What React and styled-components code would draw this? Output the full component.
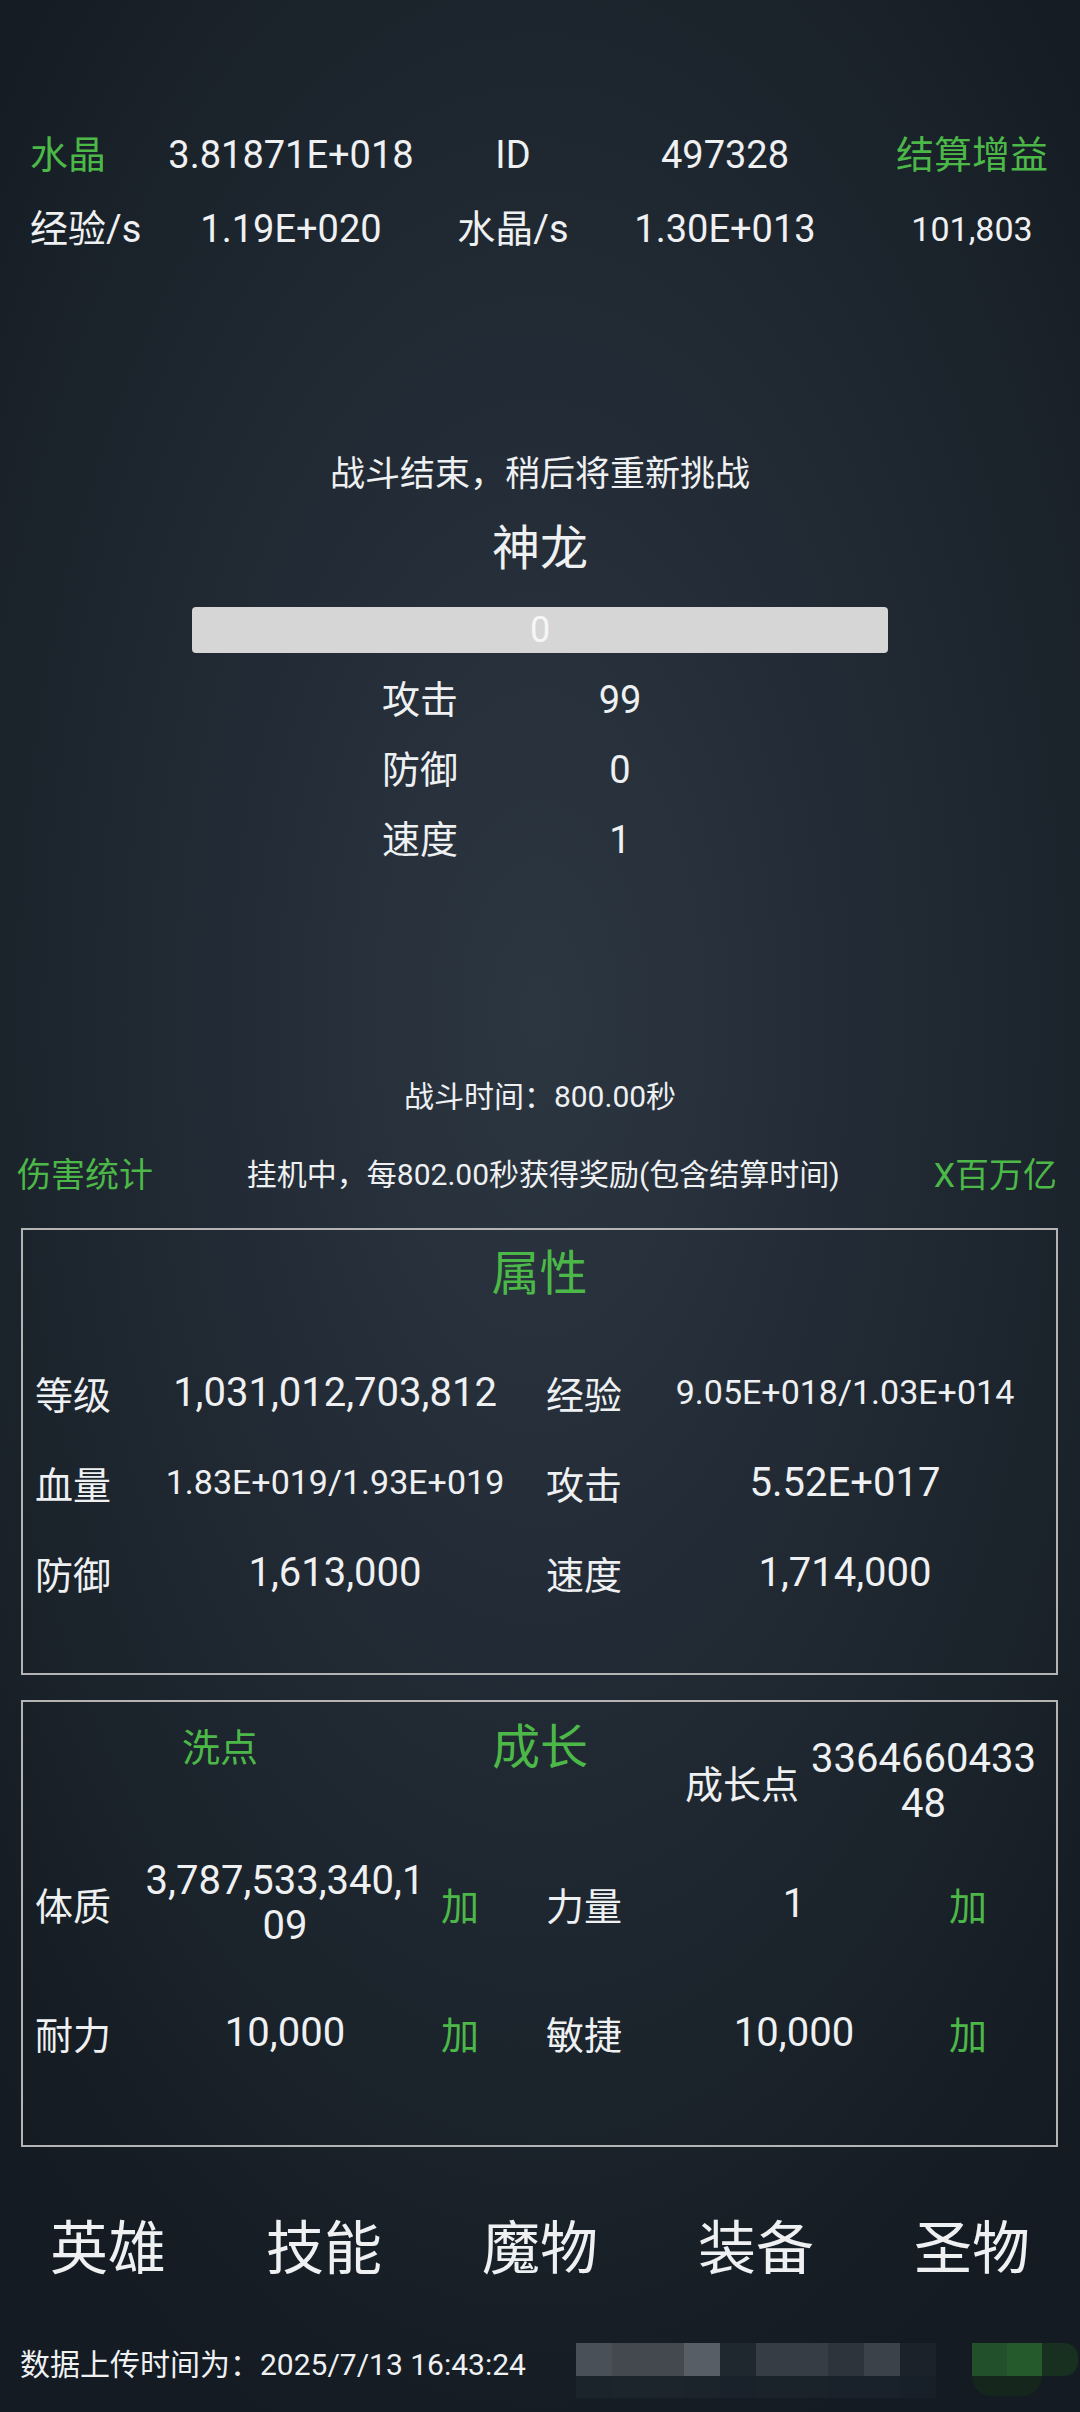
import React from 'react';
import styled, { createGlobalStyle } from 'styled-components';

const green = '#4cb848';
const white = '#eef0f2';

const GlobalStyle = createGlobalStyle`
  html, body {
    margin: 0;
    padding: 0;
    background: #121921;
  }
  body {
    font-family: Roboto, "Noto Sans CJK SC", sans-serif;
    color: ${white};
  }
`;

const Page = styled.div`
  width: 1080px;
  min-height: 2412px;
  box-sizing: border-box;
  padding-top: 118px;
  background: radial-gradient(ellipse 760px 1500px at 50% 42%, #2c3641 0%, #232c36 40%, #141b22 100%);
  overflow: hidden;
`;

const TopGrid = styled.div`
  display: grid;
  grid-template-columns: 166px 250px 194px 230px 1fr;
  grid-auto-rows: 74px;
  align-items: center;
`;

const TopCell = styled.div`
  font-size: ${p => (p.$small ? '34px' : '38px')};
  line-height: 74px;
  text-align: ${p => (p.$left ? 'left' : 'center')};
  padding-left: ${p => (p.$left ? '30px' : p.$last ? '24px' : '0')};
  color: ${p => (p.$green ? green : white)};
  white-space: nowrap;
`;

const Battle = styled.section`
  margin-top: 184px;
  display: flex;
  flex-direction: column;
  align-items: center;
`;

const BattleNote = styled.div`
  font-size: 35px;
  line-height: 50px;
`;

const EnemyName = styled.div`
  margin-top: 19px;
  font-size: 48px;
  line-height: 60px;
`;

const HpBar = styled.div`
  margin-top: 28px;
  width: 696px;
  height: 46px;
  border-radius: 4px;
  background: #d6d6d6;
  color: #f6f6f6;
  font-size: 36px;
  line-height: 46px;
  text-align: center;
`;

const EnemyStats = styled.div`
  margin-top: 12px;
  display: grid;
  grid-template-columns: 200px 200px;
  grid-auto-rows: 70px;
  align-items: center;
  padding-right: 40px;
`;

const EnemyCell = styled.div`
  font-size: 38px;
  line-height: 70px;
  text-align: center;
`;

const FightTime = styled.div`
  margin-top: 202px;
  font-size: 30px;
  line-height: 40px;
  text-align: center;
`;

const InfoRow = styled.div`
  margin-top: 30px;
  height: 50px;
  display: flex;
  justify-content: space-between;
  align-items: center;
  padding: 0 23px 0 17px;
`;

const InfoLink = styled.div`
  color: ${green};
  font-size: 34px;
`;

const InfoText = styled.div`
  font-size: 30px;
`;

const Panel = styled.section`
  margin: ${p => p.$gap}px 22px 0 21px;
  border: 2px solid #b4b4b4;
  padding: ${p => p.$pt}px 0 ${p => p.$pb}px 12px;
`;

const PanelTitle = styled.div`
  color: ${green};
  font-size: 48px;
  line-height: 60px;
  text-align: center;
  padding-right: ${p => (p.$inGrid ? 0 : 12)}px;
`;

const AttrGrid = styled.div`
  margin-top: 43px;
  display: grid;
  grid-template-columns: 125px 350px 160px 350px;
  grid-auto-rows: 90px;
  align-items: center;
`;

const Label = styled.div`
  font-size: 38px;
  padding-left: ${p => p.$indent || 0}px;
  white-space: nowrap;
`;

const Value = styled.div`
  font-size: ${p => (p.$small ? '34px' : '40px')};
  text-align: center;
  white-space: nowrap;
`;

const GrowHeader = styled.div`
  display: grid;
  grid-template-columns: 370px 270px 1fr;
  align-items: start;
`;

const ResetLink = styled.div`
  color: ${green};
  font-size: 38px;
  line-height: 60px;
  text-align: center;
`;

const PointsBox = styled.div`
  padding: 18px 0 0 10px;
  display: flex;
  align-items: center;
  gap: 7px;
`;

const WrapValue = styled.div`
  width: ${p => p.$w}px;
  font-size: 40px;
  line-height: 45px;
  text-align: center;
  word-break: break-all;
`;

const GrowGrid = styled.div`
  margin-top: 27px;
  display: grid;
  grid-template-columns: 105px 290px 60px 190px 228px 120px;
  grid-auto-rows: 100px;
  row-gap: 29px;
  align-items: center;
`;

const AddButton = styled.div`
  color: ${green};
  font-size: 38px;
  text-align: center;
`;

const NavBar = styled.nav`
  margin-top: 62px;
  display: grid;
  grid-template-columns: repeat(5, 1fr);
`;

const NavItem = styled.div`
  font-size: 58px;
  line-height: 80px;
  text-align: center;
`;

const Footer = styled.footer`
  margin-top: 54px;
  display: grid;
  grid-template-columns: 556px 396px 1fr;
  align-items: start;
  padding-left: 20px;
`;

const UploadTime = styled.div`
  font-size: 30px;
  line-height: 44px;
  white-space: nowrap;
`;

const Mosaic = styled.div`
  display: flex;
  flex-direction: column;
`;

const MosaicRow = styled.div`
  display: flex;
`;

const Tile = styled.div`
  width: ${p => p.$w || 36}px;
  height: ${p => p.$h || 33}px;
  background: ${p => p.$c};
  border-radius: ${p => p.$r || 0};
`;

const topRows = [
  [
    { t: '水晶', left: true, green: true },
    { t: '3.81871E+018' },
    { t: 'ID' },
    { t: '497328' },
    { t: '结算增益', green: true, last: true },
  ],
  [
    { t: '经验/s', left: true },
    { t: '1.19E+020' },
    { t: '水晶/s' },
    { t: '1.30E+013' },
    { t: '101,803', small: true, last: true },
  ],
];

const enemy = [
  ['攻击', '99'],
  ['防御', '0'],
  ['速度', '1'],
];

const attrs = [
  ['等级', '1,031,012,703,812', false, '经验', '9.05E+018/1.03E+014', true],
  ['血量', '1.83E+019/1.93E+019', true, '攻击', '5.52E+017', false],
  ['防御', '1,613,000', false, '速度', '1,714,000', false],
];

const growth = [
  ['体质', '3,787,533,340,109', '力量', '1'],
  ['耐力', '10,000', '敏捷', '10,000'],
];

const mosaicTop = ['#4a5058', '#43494f', '#43494f', '#585e65', '#1f272f', '#363d45', '#363d45', '#2e343b', '#3b4249', '#1c2229'];
const mosaicBottom = ['#1b232b', '#1c242c', '#1c242c', '#1b232b', '#19212a', '#1a222a', '#1a222a', '#19212a', '#19212a', '#172028'];

export default function App() {
  return (
    <Page>
      <GlobalStyle />
      <TopGrid>
        {topRows.map((row, i) =>
          row.map((c, j) => (
            <TopCell key={`${i}-${j}`} $left={c.left} $green={c.green} $small={c.small} $last={c.last}>
              {c.t}
            </TopCell>
          ))
        )}
      </TopGrid>

      <Battle>
        <BattleNote>战斗结束，稍后将重新挑战</BattleNote>
        <EnemyName>神龙</EnemyName>
        <HpBar>0</HpBar>
        <EnemyStats>
          {enemy.map(([k, v]) => (
            <React.Fragment key={k}>
              <EnemyCell>{k}</EnemyCell>
              <EnemyCell>{v}</EnemyCell>
            </React.Fragment>
          ))}
        </EnemyStats>
      </Battle>

      <FightTime>战斗时间：800.00秒</FightTime>

      <InfoRow>
        <InfoLink>伤害统计</InfoLink>
        <InfoText>挂机中，每802.00秒获得奖励(包含结算时间)</InfoText>
        <InfoLink>X百万亿</InfoLink>
      </InfoRow>

      <Panel $gap={31} $pt={14} $pb={56}>
        <PanelTitle>属性</PanelTitle>
        <AttrGrid>
          {attrs.map(([k1, v1, s1, k2, v2, s2]) => (
            <React.Fragment key={k1}>
              <Label>{k1}</Label>
              <Value $small={s1}>{v1}</Value>
              <Label $indent={36}>{k2}</Label>
              <Value $small={s2}>{v2}</Value>
            </React.Fragment>
          ))}
        </AttrGrid>
      </Panel>

      <Panel $gap={25} $pt={16} $pb={63}>
        <GrowHeader>
          <ResetLink>洗点</ResetLink>
          <PanelTitle $inGrid>成长</PanelTitle>
          <PointsBox>
            <Label>成长点</Label>
            <WrapValue $w={235}>336466043348</WrapValue>
          </PointsBox>
        </GrowHeader>
        <GrowGrid>
          {growth.map(([k1, v1, k2, v2]) => (
            <React.Fragment key={k1}>
              <Label>{k1}</Label>
              <WrapValue $w={290}>{v1}</WrapValue>
              <AddButton>加</AddButton>
              <Label $indent={56}>{k2}</Label>
              <WrapValue $w={228}>{v2}</WrapValue>
              <AddButton>加</AddButton>
            </React.Fragment>
          ))}
        </GrowGrid>
      </Panel>

      <NavBar>
        {['英雄', '技能', '魔物', '装备', '圣物'].map(n => (
          <NavItem key={n}>{n}</NavItem>
        ))}
      </NavBar>

      <Footer>
        <UploadTime>数据上传时间为：2025/7/13 16:43:24</UploadTime>
        <Mosaic>
          <MosaicRow>
            {mosaicTop.map((c, i) => (
              <Tile key={i} $c={c} />
            ))}
          </MosaicRow>
          <MosaicRow>
            {mosaicBottom.map((c, i) => (
              <Tile key={i} $c={c} $h={22} />
            ))}
          </MosaicRow>
        </Mosaic>
        <Mosaic>
          <MosaicRow>
            <Tile $c="#22502a" $w={35} />
            <Tile $c="#245a2c" $w={35} />
            <Tile $c="#17301f" $w={36} $r="0 14px 14px 0" />
          </MosaicRow>
          <MosaicRow>
            <Tile $c="#15261d" $w={70} $h={20} $r="0 0 20px 20px" />
          </MosaicRow>
        </Mosaic>
      </Footer>
    </Page>
  );
}
